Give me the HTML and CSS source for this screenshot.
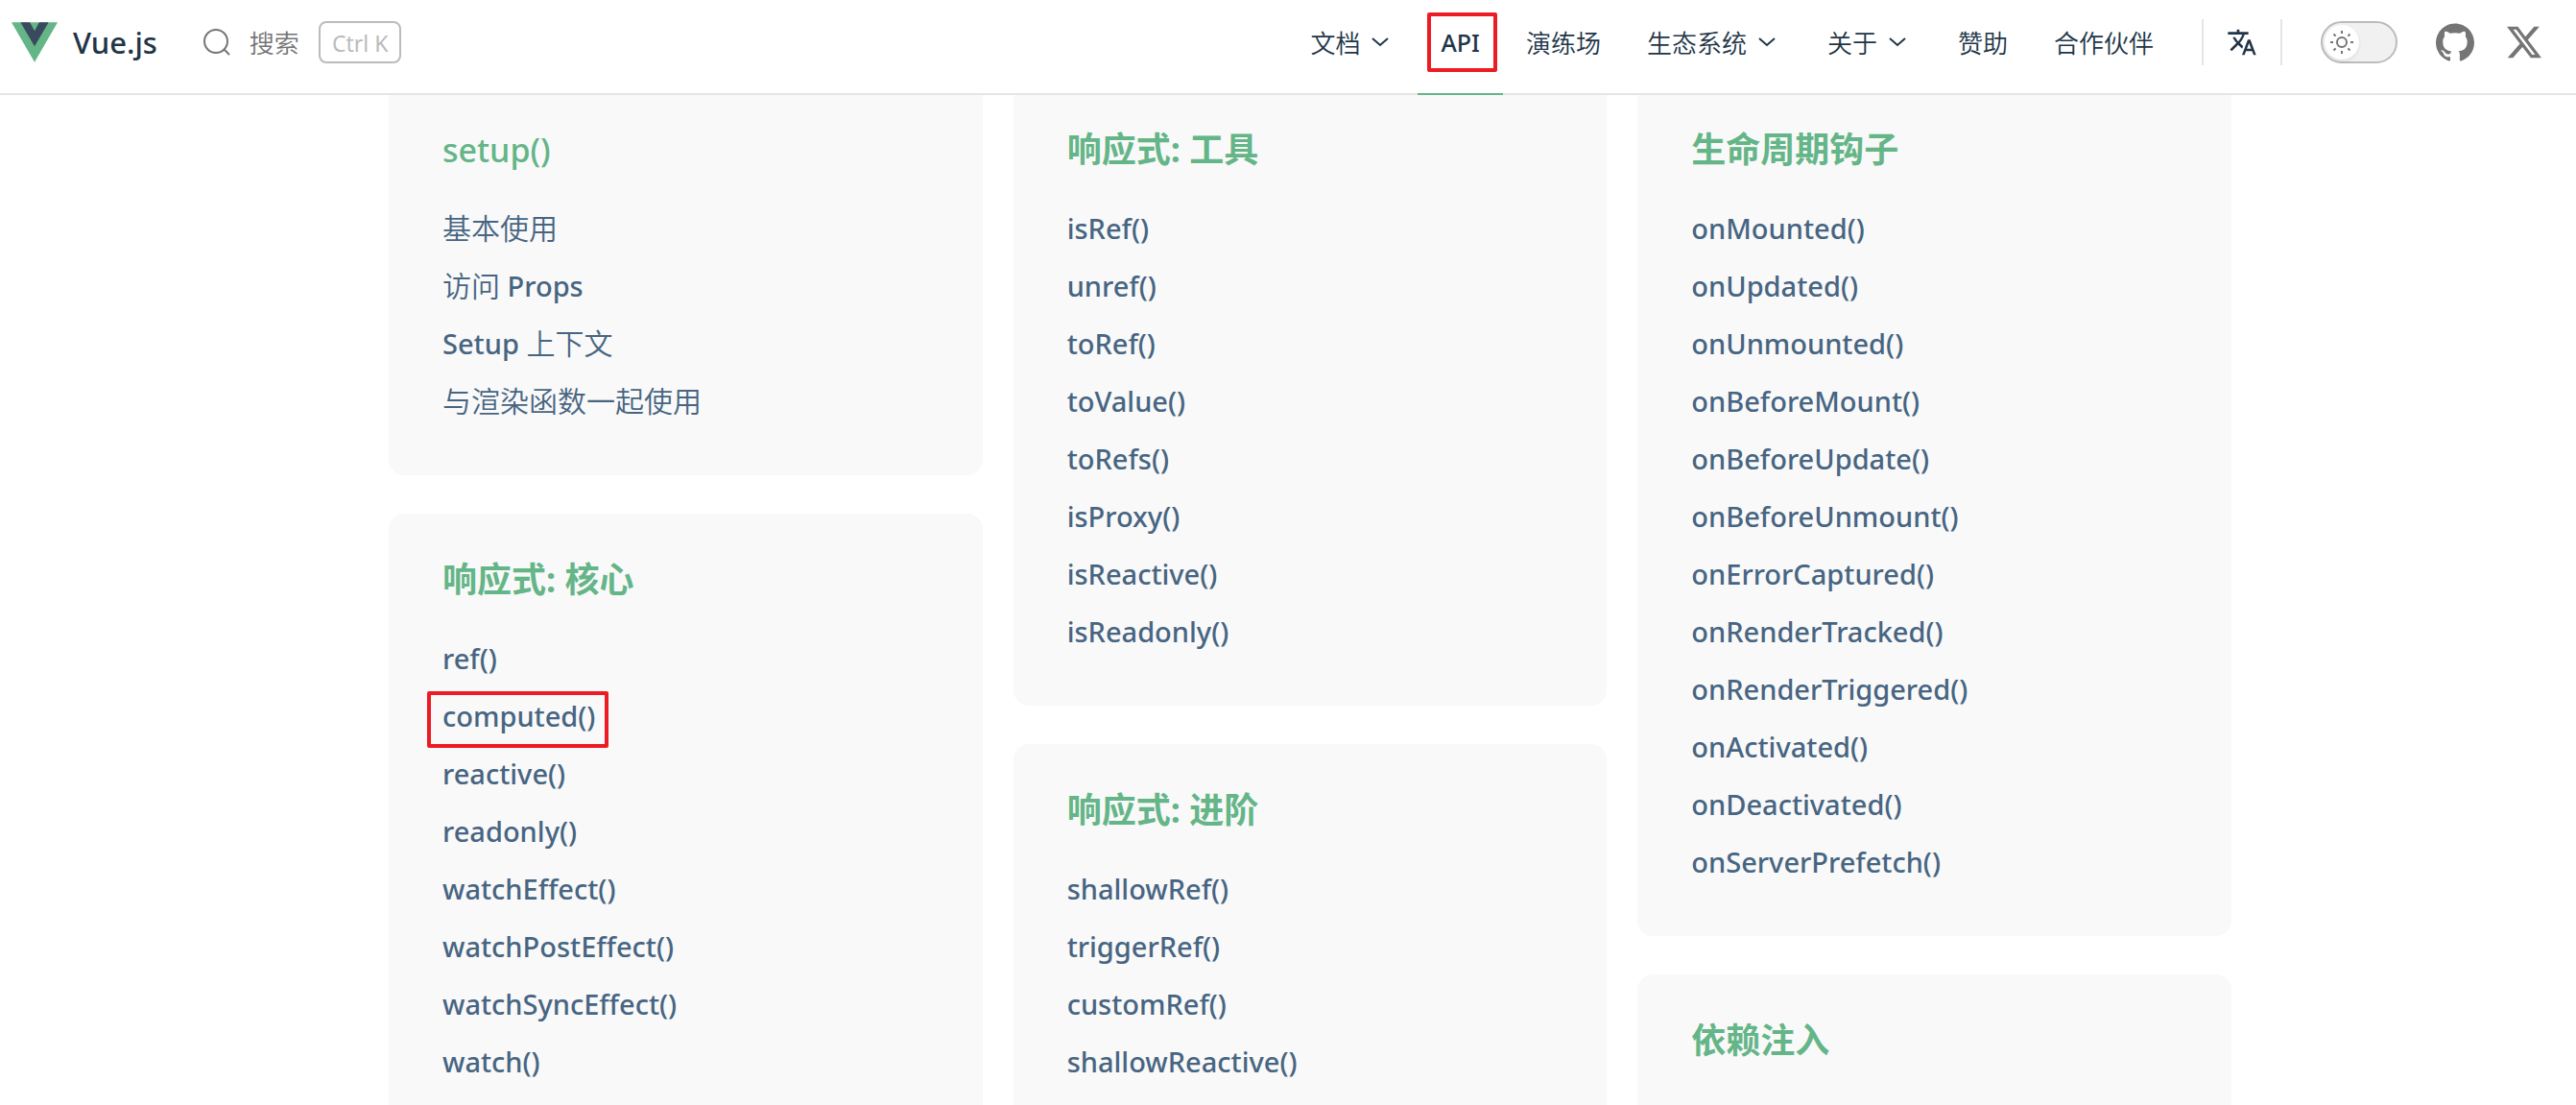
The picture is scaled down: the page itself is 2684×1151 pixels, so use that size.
FILE: index.html
```html
<!DOCTYPE html>
<html lang="zh-CN">
<head>
<meta charset="utf-8">
<title>API 参考 | Vue.js</title>
<link rel="stylesheet" href="styles.css">
</head>
<body>
<header class="topbar">
  <a class="brand" href="#">
    <svg class="brand-logo" viewBox="0 0 128 111" aria-hidden="true"><path fill="#64b587" d="M0 0h128L64 111z"/><path fill="#3a495d" d="M25 0h26l13 24L77 0h26L64 67z"/></svg>
    <span>Vue.js</span>
  </a>
  <button class="search" type="button">
    <svg class="search-icon" viewBox="0 0 28 28" fill="none" stroke="currentColor" stroke-width="2" aria-hidden="true"><circle cx="13" cy="13" r="12"/><path d="M21 21l6 6"/></svg>
    <span>搜索</span>
    <kbd class="keys">Ctrl K</kbd>
  </button>
  <nav class="menu">
    <button class="menu-item" type="button">文档<svg class="chevron" viewBox="0 0 18 12" aria-hidden="true"><path d="M1 2l8 7 8-7"/></svg></button>
    <a class="menu-item is-active" href="#"><span class="marked marked-api">API</span></a>
    <a class="menu-item" href="#">演练场</a>
    <button class="menu-item" type="button">生态系统<svg class="chevron" viewBox="0 0 18 12" aria-hidden="true"><path d="M1 2l8 7 8-7"/></svg></button>
    <button class="menu-item" type="button">关于<svg class="chevron" viewBox="0 0 18 12" aria-hidden="true"><path d="M1 2l8 7 8-7"/></svg></button>
    <a class="menu-item" href="#">赞助</a>
    <a class="menu-item" href="#">合作伙伴</a>
  </nav>
  <button class="translate" type="button" aria-label="切换语言">
    <svg viewBox="0 0 24 24" fill="currentColor" aria-hidden="true"><path d="M12.87 15.07l-2.54-2.51.03-.03c1.74-1.94 2.98-4.17 3.71-6.53H17V4h-7V2H8v2H1v1.99h11.17C11.5 7.92 10.44 9.75 9 11.35 8.07 10.32 7.3 9.19 6.69 8h-2c.73 1.63 1.73 3.17 2.98 4.56l-5.09 5.02L4 19l5-5 3.11 3.11.76-2.04zM18.5 10h-2L12 22h2l1.12-3h4.75L21 22h2l-4.5-12zm-2.62 7l1.62-4.33L19.12 17h-3.24z"/></svg>
  </button>
  <button class="theme" type="button" role="switch" aria-checked="false" aria-label="切换深色模式">
    <span class="theme-knob">
      <svg viewBox="0 0 24 24" fill="none" stroke="currentColor" stroke-width="2" aria-hidden="true"><circle cx="12" cy="12" r="5"/><path d="M12 0v3M12 21v3M0 12h3M21 12h3M3.500 3.500l2.100 2.100M18.400 18.400l2.100 2.100M3.500 20.500l2.100-2.100M18.400 5.600l2.100-2.100"/></svg>
    </span>
  </button>
  <a class="social" href="#" aria-label="GitHub">
    <svg viewBox="0 0 24 24" fill="currentColor" aria-hidden="true"><path d="M12 .297c-6.63 0-12 5.373-12 12 0 5.303 3.438 9.8 8.205 11.385.6.113.82-.258.82-.577 0-.285-.01-1.04-.015-2.04-3.338.724-4.042-1.61-4.042-1.61C4.422 18.07 3.633 17.7 3.633 17.7c-1.087-.744.084-.729.084-.729 1.205.084 1.838 1.236 1.838 1.236 1.07 1.835 2.809 1.305 3.495.998.108-.776.417-1.305.76-1.605-2.665-.3-5.466-1.332-5.466-5.93 0-1.31.465-2.38 1.235-3.22-.135-.303-.54-1.523.105-3.176 0 0 1.005-.322 3.3 1.23.96-.267 1.98-.399 3-.405 1.02.006 2.04.138 3 .405 2.28-1.552 3.285-1.23 3.285-1.23.645 1.653.24 2.873.12 3.176.765.84 1.23 1.91 1.23 3.22 0 4.61-2.805 5.625-5.475 5.92.42.36.81 1.096.81 2.22 0 1.606-.015 2.896-.015 3.286 0 .315.21.69.825.57C20.565 22.092 24 17.592 24 12.297c0-6.627-5.373-12-12-12"/></svg>
  </a>
  <a class="social" href="#" aria-label="X">
    <svg viewBox="0 0 24 24" fill="currentColor" aria-hidden="true"><path d="M18.901 1.153h3.68l-8.04 9.19L24 22.846h-7.406l-5.800-7.584-6.638 7.584H.474l8.600-9.830L0 1.154h7.594l5.243 6.932ZM17.610 20.644h2.039L6.486 3.240H4.298Z"/></svg>
  </a>
</header>
<main class="content">
  <div class="columns">
    <div class="column">
      <section class="card">
        <h3 class="card-title"><span class="code">setup()</span></h3>
        <ul class="links">
          <li><a href="#"><span class="zh">基本使用</span></a></li>
          <li><a href="#"><span class="zh">访问</span> Props</a></li>
          <li><a href="#">Setup <span class="zh">上下文</span></a></li>
          <li><a href="#"><span class="zh">与渲染函数一起使用</span></a></li>
        </ul>
      </section>
      <section class="card">
        <h3 class="card-title">响应式: 核心</h3>
        <ul class="links">
          <li><a href="#">ref()</a></li>
          <li><a class="marked marked-computed" href="#">computed()</a></li>
          <li><a href="#">reactive()</a></li>
          <li><a href="#">readonly()</a></li>
          <li><a href="#">watchEffect()</a></li>
          <li><a href="#">watchPostEffect()</a></li>
          <li><a href="#">watchSyncEffect()</a></li>
          <li><a href="#">watch()</a></li>
        </ul>
      </section>
    </div>
    <div class="column">
      <section class="card">
        <h3 class="card-title">响应式: 工具</h3>
        <ul class="links">
          <li><a href="#">isRef()</a></li>
          <li><a href="#">unref()</a></li>
          <li><a href="#">toRef()</a></li>
          <li><a href="#">toValue()</a></li>
          <li><a href="#">toRefs()</a></li>
          <li><a href="#">isProxy()</a></li>
          <li><a href="#">isReactive()</a></li>
          <li><a href="#">isReadonly()</a></li>
        </ul>
      </section>
      <section class="card">
        <h3 class="card-title">响应式: 进阶</h3>
        <ul class="links">
          <li><a href="#">shallowRef()</a></li>
          <li><a href="#">triggerRef()</a></li>
          <li><a href="#">customRef()</a></li>
          <li><a href="#">shallowReactive()</a></li>
        </ul>
      </section>
    </div>
    <div class="column">
      <section class="card">
        <h3 class="card-title">生命周期钩子</h3>
        <ul class="links">
          <li><a href="#">onMounted()</a></li>
          <li><a href="#">onUpdated()</a></li>
          <li><a href="#">onUnmounted()</a></li>
          <li><a href="#">onBeforeMount()</a></li>
          <li><a href="#">onBeforeUpdate()</a></li>
          <li><a href="#">onBeforeUnmount()</a></li>
          <li><a href="#">onErrorCaptured()</a></li>
          <li><a href="#">onRenderTracked()</a></li>
          <li><a href="#">onRenderTriggered()</a></li>
          <li><a href="#">onActivated()</a></li>
          <li><a href="#">onDeactivated()</a></li>
          <li><a href="#">onServerPrefetch()</a></li>
        </ul>
      </section>
      <section class="card">
        <h3 class="card-title">依赖注入</h3>
      </section>
    </div>
  </div>
</main>
</body>
</html>
```

FILE: styles.css
```css
:root {
  --green: #64b587;
  --text-1: #213547;
  --text-2: #476582;
  --text-3: #757575;
  --line: #e5e5e5;
  --mark: #ed1c24;
}

* {
  box-sizing: border-box;
}

body {
  margin: 0;
  height: 100vh;
  overflow: hidden;
  display: flex;
  flex-direction: column;
  background: #fff;
  color: var(--text-1);
  font-family: "Noto Sans", "Noto Sans CJK SC", sans-serif;
  font-size: 26px;
  font-weight: 350;
}

a {
  color: inherit;
  text-decoration: none;
}

button {
  margin: 0;
  padding: 0;
  border: 0;
  background: none;
  color: inherit;
  font: inherit;
}

svg {
  display: block;
}

/* Top bar */
.topbar {
  position: relative;
  z-index: 1;
  flex: none;
  display: flex;
  align-items: center;
  height: 99px;
  padding: 0 36px 9px 12px;
  border-bottom: 2px solid var(--line);
  background: #fff;
}

.brand {
  display: flex;
  align-items: center;
  gap: 16px;
  margin-right: 48px;
  font-size: 31px;
  font-weight: 500;
}

.brand-logo {
  width: 48px;
  height: 42px;
}

.search {
  display: flex;
  align-items: center;
  gap: 20px;
  color: var(--text-3);
}

.search-icon {
  width: 28px;
  height: 28px;
}

.keys {
  height: 44px;
  padding: 0 12px;
  border: 2px solid #bbb;
  border-radius: 8px;
  color: #bbb;
  font-family: inherit;
  font-size: 23px;
  font-weight: 400;
  line-height: 42px;
}

.menu {
  display: flex;
  margin: 0 26px 0 auto;
}

.menu-item {
  position: relative;
  display: flex;
  align-items: center;
  height: 88px;
  padding: 0 24px;
}

.menu-item.is-active {
  font-size: 25px;
  font-weight: 500;
}

.menu-item.is-active::after {
  content: "";
  position: absolute;
  inset: auto 0 -11px;
  height: 2px;
  background: var(--green);
}

.chevron {
  width: 18px;
  height: 12px;
  margin: 0 6px 0 12px;
  fill: none;
  stroke: currentColor;
  stroke-width: 2px;
}

/* Red frame drawn round a highlighted entry */
.marked {
  position: relative;
}

.marked::before {
  content: "";
  position: absolute;
  border: 4px solid var(--mark);
  border-radius: 2px;
}

.marked-api::before {
  inset: -14px -18px -14px -14px;
}

.marked-computed::before {
  inset: -6px -14px -14px -16px;
}

.translate {
  display: flex;
  align-items: center;
  height: 48px;
  padding: 0 24px;
  border: 2px solid var(--line);
  border-width: 0 2px;
}

.translate svg {
  width: 32px;
  height: 32px;
}

.theme {
  display: flex;
  width: 80px;
  height: 44px;
  margin: 0 8px 0 40px;
  padding: 2px;
  border: 2px solid #bbb;
  border-radius: 22px;
  background: #f1f1f1;
}

.theme-knob {
  display: grid;
  place-items: center;
  width: 36px;
  height: 36px;
  border-radius: 50%;
  background: #fff;
  box-shadow: 0 2px 4px rgba(0, 0, 0, 0.08);
  color: var(--text-3);
}

.theme-knob svg {
  width: 24px;
  height: 24px;
}

.social {
  margin-left: 32px;
  color: #757575;
}

.social svg {
  width: 40px;
  height: 40px;
}

.social:last-child {
  margin-left: 34px;
}

.social:last-child svg {
  width: 36px;
  height: 36px;
}

/* API index */
.content {
  flex: 1;
  min-height: 0;
  margin-top: -12px;
  padding-left: 46px;
}

.columns {
  display: grid;
  grid-template-columns: repeat(3, 1fr);
  gap: 32px;
  max-width: 1920px;
  margin: 0 auto;
}

.column {
  display: flex;
  flex-direction: column;
  gap: 40px;
}

.card {
  padding: 49px 56px 47px;
  border-radius: 16px;
  background: #f9f9f9;
}

.card-title {
  margin: 0 0 32px;
  color: var(--green);
  font-size: 36px;
  font-weight: 700;
  line-height: 40px;
}

.card-title .code {
  font-size: 34px;
  font-weight: 500;
}

.links {
  margin: 0;
  padding: 0;
  list-style: none;
  color: var(--text-2);
  font-size: 29px;
  font-weight: 500;
  line-height: 60px;
}

.links li {
  height: 60px;
}

.zh {
  font-size: 30px;
  font-weight: 350;
}
```
